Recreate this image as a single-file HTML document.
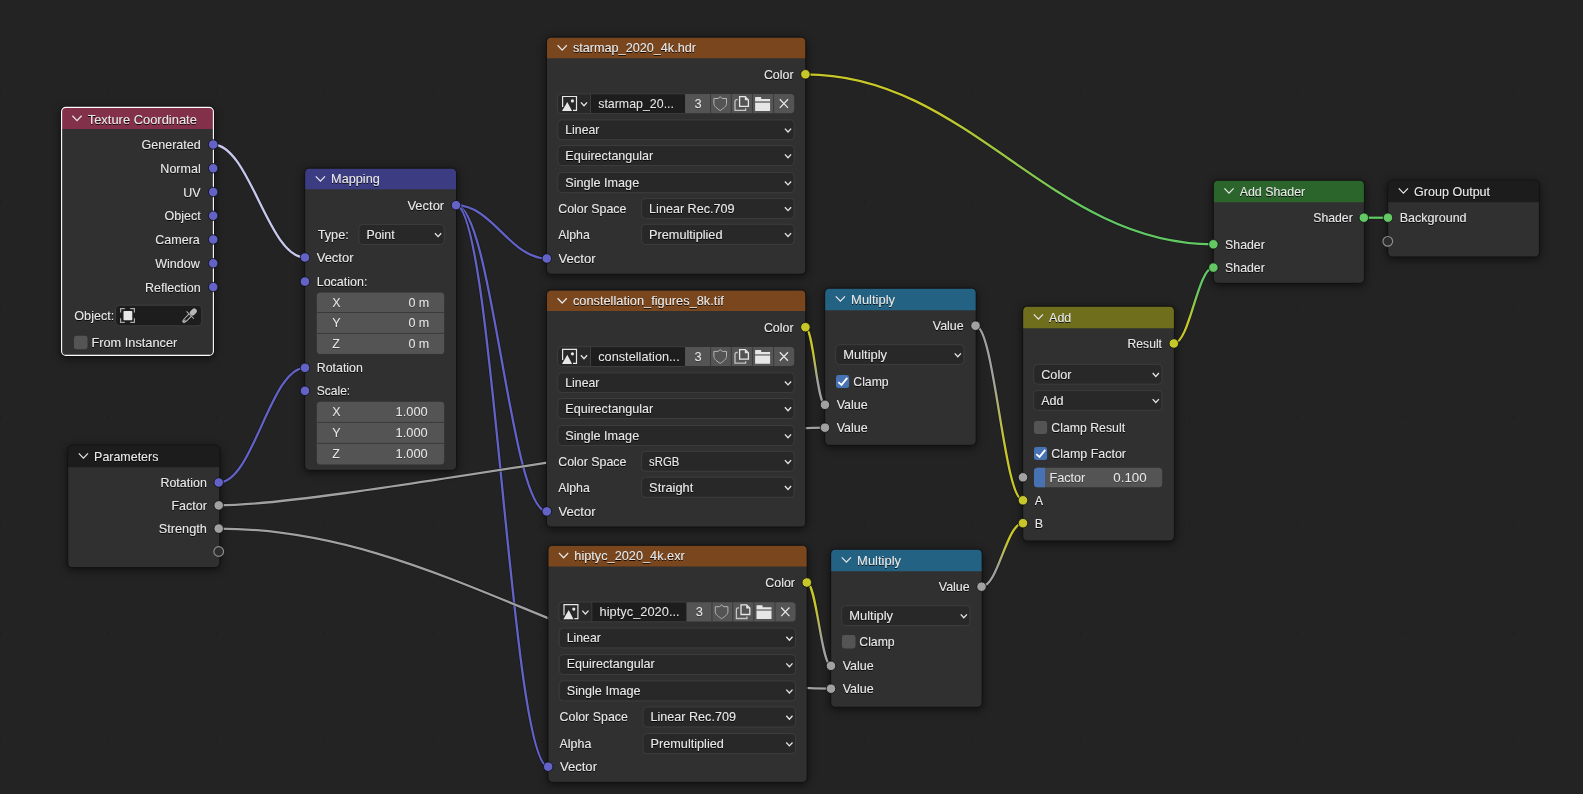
<!DOCTYPE html>
<html lang="en"><head><meta charset="utf-8"><title>Shader Nodes</title>
<style>
html,body{margin:0;padding:0;background:#232323;overflow:hidden}
body{width:1583px;height:794px}
svg{display:block}
.t text{font-family:"Liberation Sans",sans-serif;font-size:13.0px;fill:#e6e6e6}
.ck{fill:none;stroke:#e6e6e6;stroke-width:1.25}
.dk{fill:none;stroke:#e6e6e6;stroke-width:1.3}
</style></head><body>
<svg width="1583" height="794" viewBox="0 0 1583 794">
<defs>
<filter id="sh" filterUnits="userSpaceOnUse" x="0" y="0" width="1583" height="794"><feGaussianBlur stdDeviation="4.5"/></filter>
<filter id="ts" filterUnits="userSpaceOnUse" x="0" y="0" width="1583" height="794"><feDropShadow dx="0" dy="1" stdDeviation="0.55" flood-color="#000" flood-opacity="0.85"/></filter>
<filter id="ts2" filterUnits="userSpaceOnUse" x="0" y="0" width="1583" height="794"><feDropShadow dx="0" dy="1" stdDeviation="0.5" flood-color="#000" flood-opacity="0.3"/></filter>
</defs>
<rect width="1583" height="794" fill="#232323"/>
<g fill="#1e1e1e"><circle cx="0.5" cy="-14.4" r="0.9"/><circle cx="0.5" cy="93.6" r="0.9"/><circle cx="0.5" cy="201.6" r="0.9"/><circle cx="0.5" cy="309.6" r="0.9"/><circle cx="0.5" cy="417.6" r="0.9"/><circle cx="0.5" cy="525.6" r="0.9"/><circle cx="0.5" cy="633.6" r="0.9"/><circle cx="0.5" cy="741.6" r="0.9"/><circle cx="0.5" cy="849.6" r="0.9"/><circle cx="108.55" cy="-14.4" r="0.9"/><circle cx="108.55" cy="93.6" r="0.9"/><circle cx="108.55" cy="201.6" r="0.9"/><circle cx="108.55" cy="309.6" r="0.9"/><circle cx="108.55" cy="417.6" r="0.9"/><circle cx="108.55" cy="525.6" r="0.9"/><circle cx="108.55" cy="633.6" r="0.9"/><circle cx="108.55" cy="741.6" r="0.9"/><circle cx="108.55" cy="849.6" r="0.9"/><circle cx="216.6" cy="-14.4" r="0.9"/><circle cx="216.6" cy="93.6" r="0.9"/><circle cx="216.6" cy="201.6" r="0.9"/><circle cx="216.6" cy="309.6" r="0.9"/><circle cx="216.6" cy="417.6" r="0.9"/><circle cx="216.6" cy="525.6" r="0.9"/><circle cx="216.6" cy="633.6" r="0.9"/><circle cx="216.6" cy="741.6" r="0.9"/><circle cx="216.6" cy="849.6" r="0.9"/><circle cx="324.65" cy="-14.4" r="0.9"/><circle cx="324.65" cy="93.6" r="0.9"/><circle cx="324.65" cy="201.6" r="0.9"/><circle cx="324.65" cy="309.6" r="0.9"/><circle cx="324.65" cy="417.6" r="0.9"/><circle cx="324.65" cy="525.6" r="0.9"/><circle cx="324.65" cy="633.6" r="0.9"/><circle cx="324.65" cy="741.6" r="0.9"/><circle cx="324.65" cy="849.6" r="0.9"/><circle cx="432.7" cy="-14.4" r="0.9"/><circle cx="432.7" cy="93.6" r="0.9"/><circle cx="432.7" cy="201.6" r="0.9"/><circle cx="432.7" cy="309.6" r="0.9"/><circle cx="432.7" cy="417.6" r="0.9"/><circle cx="432.7" cy="525.6" r="0.9"/><circle cx="432.7" cy="633.6" r="0.9"/><circle cx="432.7" cy="741.6" r="0.9"/><circle cx="432.7" cy="849.6" r="0.9"/><circle cx="540.75" cy="-14.4" r="0.9"/><circle cx="540.75" cy="93.6" r="0.9"/><circle cx="540.75" cy="201.6" r="0.9"/><circle cx="540.75" cy="309.6" r="0.9"/><circle cx="540.75" cy="417.6" r="0.9"/><circle cx="540.75" cy="525.6" r="0.9"/><circle cx="540.75" cy="633.6" r="0.9"/><circle cx="540.75" cy="741.6" r="0.9"/><circle cx="540.75" cy="849.6" r="0.9"/><circle cx="648.8" cy="-14.4" r="0.9"/><circle cx="648.8" cy="93.6" r="0.9"/><circle cx="648.8" cy="201.6" r="0.9"/><circle cx="648.8" cy="309.6" r="0.9"/><circle cx="648.8" cy="417.6" r="0.9"/><circle cx="648.8" cy="525.6" r="0.9"/><circle cx="648.8" cy="633.6" r="0.9"/><circle cx="648.8" cy="741.6" r="0.9"/><circle cx="648.8" cy="849.6" r="0.9"/><circle cx="756.85" cy="-14.4" r="0.9"/><circle cx="756.85" cy="93.6" r="0.9"/><circle cx="756.85" cy="201.6" r="0.9"/><circle cx="756.85" cy="309.6" r="0.9"/><circle cx="756.85" cy="417.6" r="0.9"/><circle cx="756.85" cy="525.6" r="0.9"/><circle cx="756.85" cy="633.6" r="0.9"/><circle cx="756.85" cy="741.6" r="0.9"/><circle cx="756.85" cy="849.6" r="0.9"/><circle cx="864.9" cy="-14.4" r="0.9"/><circle cx="864.9" cy="93.6" r="0.9"/><circle cx="864.9" cy="201.6" r="0.9"/><circle cx="864.9" cy="309.6" r="0.9"/><circle cx="864.9" cy="417.6" r="0.9"/><circle cx="864.9" cy="525.6" r="0.9"/><circle cx="864.9" cy="633.6" r="0.9"/><circle cx="864.9" cy="741.6" r="0.9"/><circle cx="864.9" cy="849.6" r="0.9"/><circle cx="972.95" cy="-14.4" r="0.9"/><circle cx="972.95" cy="93.6" r="0.9"/><circle cx="972.95" cy="201.6" r="0.9"/><circle cx="972.95" cy="309.6" r="0.9"/><circle cx="972.95" cy="417.6" r="0.9"/><circle cx="972.95" cy="525.6" r="0.9"/><circle cx="972.95" cy="633.6" r="0.9"/><circle cx="972.95" cy="741.6" r="0.9"/><circle cx="972.95" cy="849.6" r="0.9"/><circle cx="1081" cy="-14.4" r="0.9"/><circle cx="1081" cy="93.6" r="0.9"/><circle cx="1081" cy="201.6" r="0.9"/><circle cx="1081" cy="309.6" r="0.9"/><circle cx="1081" cy="417.6" r="0.9"/><circle cx="1081" cy="525.6" r="0.9"/><circle cx="1081" cy="633.6" r="0.9"/><circle cx="1081" cy="741.6" r="0.9"/><circle cx="1081" cy="849.6" r="0.9"/><circle cx="1189.05" cy="-14.4" r="0.9"/><circle cx="1189.05" cy="93.6" r="0.9"/><circle cx="1189.05" cy="201.6" r="0.9"/><circle cx="1189.05" cy="309.6" r="0.9"/><circle cx="1189.05" cy="417.6" r="0.9"/><circle cx="1189.05" cy="525.6" r="0.9"/><circle cx="1189.05" cy="633.6" r="0.9"/><circle cx="1189.05" cy="741.6" r="0.9"/><circle cx="1189.05" cy="849.6" r="0.9"/><circle cx="1297.1" cy="-14.4" r="0.9"/><circle cx="1297.1" cy="93.6" r="0.9"/><circle cx="1297.1" cy="201.6" r="0.9"/><circle cx="1297.1" cy="309.6" r="0.9"/><circle cx="1297.1" cy="417.6" r="0.9"/><circle cx="1297.1" cy="525.6" r="0.9"/><circle cx="1297.1" cy="633.6" r="0.9"/><circle cx="1297.1" cy="741.6" r="0.9"/><circle cx="1297.1" cy="849.6" r="0.9"/><circle cx="1405.15" cy="-14.4" r="0.9"/><circle cx="1405.15" cy="93.6" r="0.9"/><circle cx="1405.15" cy="201.6" r="0.9"/><circle cx="1405.15" cy="309.6" r="0.9"/><circle cx="1405.15" cy="417.6" r="0.9"/><circle cx="1405.15" cy="525.6" r="0.9"/><circle cx="1405.15" cy="633.6" r="0.9"/><circle cx="1405.15" cy="741.6" r="0.9"/><circle cx="1405.15" cy="849.6" r="0.9"/><circle cx="1513.2" cy="-14.4" r="0.9"/><circle cx="1513.2" cy="93.6" r="0.9"/><circle cx="1513.2" cy="201.6" r="0.9"/><circle cx="1513.2" cy="309.6" r="0.9"/><circle cx="1513.2" cy="417.6" r="0.9"/><circle cx="1513.2" cy="525.6" r="0.9"/><circle cx="1513.2" cy="633.6" r="0.9"/><circle cx="1513.2" cy="741.6" r="0.9"/><circle cx="1513.2" cy="849.6" r="0.9"/></g>
<g filter="url(#sh)" fill="#000" opacity="0.55">
<rect x="60.6" y="108.4" width="153.8" height="250" rx="6"/>
<rect x="304" y="169.5" width="153.2" height="303.5" rx="6"/>
<rect x="67" y="446.5" width="153.5" height="123.8" rx="6"/>
<rect x="545.8" y="38.4" width="260.7" height="238.5" rx="6"/>
<rect x="545.8" y="291.3" width="260.7" height="238.5" rx="6"/>
<rect x="547.2" y="546.6" width="260.7" height="238.5" rx="6"/>
<rect x="824" y="289.5" width="152.9" height="158.5" rx="6"/>
<rect x="830" y="550.5" width="152.9" height="159.4" rx="6"/>
<rect x="1022" y="307.5" width="153.1" height="236.2" rx="6"/>
<rect x="1212.6" y="181.5" width="152.5" height="104.5" rx="6"/>
<rect x="1387" y="181.5" width="153.1" height="78.2" rx="6"/>
</g>
<g stroke-linecap="butt">
<path d="M212.8 144.5C249.68 144.5 268.12 257.5 305 257.5" stroke="#0e0e10" stroke-width="3.5" fill="none" opacity="0.6"/>
<path d="M212.8 144.5C249.68 144.5 268.12 257.5 305 257.5" stroke="#c8c8ee" stroke-width="2.3" fill="none"/>
<path d="M218.7 482.5C253.22 482.5 270.48 367.8 305 367.8" stroke="#0e0e10" stroke-width="3.5" fill="none" opacity="0.6"/>
<path d="M218.7 482.5C253.22 482.5 270.48 367.8 305 367.8" stroke="#6363c7" stroke-width="2.3" fill="none"/>
<path d="M455.9 205.2C492.26 205.2 510.44 258.5 546.8 258.5" stroke="#0e0e10" stroke-width="3.5" fill="none" opacity="0.6"/>
<path d="M455.9 205.2C492.26 205.2 510.44 258.5 546.8 258.5" stroke="#6363c7" stroke-width="2.3" fill="none"/>
<path d="M455.9 205.2C492.26 205.2 510.44 511.4 546.8 511.4" stroke="#0e0e10" stroke-width="3.5" fill="none" opacity="0.6"/>
<path d="M455.9 205.2C492.26 205.2 510.44 511.4 546.8 511.4" stroke="#6363c7" stroke-width="2.3" fill="none"/>
<path d="M455.9 205.2C492.82 205.2 511.28 766.7 548.2 766.7" stroke="#0e0e10" stroke-width="3.5" fill="none" opacity="0.6"/>
<path d="M455.9 205.2C492.82 205.2 511.28 766.7 548.2 766.7" stroke="#6363c7" stroke-width="2.3" fill="none"/>
<path d="M218.7 505.4C327.48 505.4 716.22 427.7 825 427.7" stroke="#0e0e10" stroke-width="3.5" fill="none" opacity="0.6"/>
<path d="M218.7 505.4C327.48 505.4 716.22 427.7 825 427.7" stroke="#a1a1a1" stroke-width="2.3" fill="none"/>
<path d="M218.7 528.6C442.84 528.6 606.86 688.7 831 688.7" stroke="#0e0e10" stroke-width="3.5" fill="none" opacity="0.6"/>
<path d="M218.7 528.6C442.84 528.6 606.86 688.7 831 688.7" stroke="#a1a1a1" stroke-width="2.3" fill="none"/>
<path d="M805.4 74.3C968.6 74.3 1050.2 244.3 1213.4 244.3" stroke="#0e0e10" stroke-width="3.5" fill="none" opacity="0.6"/>
<linearGradient id="g7" gradientUnits="userSpaceOnUse" x1="805.4" y1="74.3" x2="1213.4" y2="244.3"><stop offset="0.3" stop-color="#c7c729"/><stop offset="0.7" stop-color="#63c763"/></linearGradient>
<path d="M805.4 74.3C968.6 74.3 1050.2 244.3 1213.4 244.3" stroke="url(#g7)" stroke-width="2.3" fill="none"/>
<path d="M805.4 327.2C813.24 327.2 817.16 404.8 825 404.8" stroke="#0e0e10" stroke-width="3.5" fill="none" opacity="0.6"/>
<linearGradient id="g8" gradientUnits="userSpaceOnUse" x1="805.4" y1="327.2" x2="825" y2="404.8"><stop offset="0.3" stop-color="#c7c729"/><stop offset="0.7" stop-color="#a1a1a1"/></linearGradient>
<path d="M805.4 327.2C813.24 327.2 817.16 404.8 825 404.8" stroke="url(#g8)" stroke-width="2.3" fill="none"/>
<path d="M806.8 582.5C816.48 582.5 821.32 665.8 831 665.8" stroke="#0e0e10" stroke-width="3.5" fill="none" opacity="0.6"/>
<linearGradient id="g9" gradientUnits="userSpaceOnUse" x1="806.8" y1="582.5" x2="831" y2="665.8"><stop offset="0.3" stop-color="#c7c729"/><stop offset="0.7" stop-color="#a1a1a1"/></linearGradient>
<path d="M806.8 582.5C816.48 582.5 821.32 665.8 831 665.8" stroke="url(#g9)" stroke-width="2.3" fill="none"/>
<path d="M975.5 325.7C994.5 325.7 1004 500.3 1023 500.3" stroke="#0e0e10" stroke-width="3.5" fill="none" opacity="0.6"/>
<linearGradient id="g10" gradientUnits="userSpaceOnUse" x1="975.5" y1="325.7" x2="1023" y2="500.3"><stop offset="0.3" stop-color="#a1a1a1"/><stop offset="0.7" stop-color="#c7c729"/></linearGradient>
<path d="M975.5 325.7C994.5 325.7 1004 500.3 1023 500.3" stroke="url(#g10)" stroke-width="2.3" fill="none"/>
<path d="M981.5 586.7C998.1 586.7 1006.4 523.2 1023 523.2" stroke="#0e0e10" stroke-width="3.5" fill="none" opacity="0.6"/>
<linearGradient id="g11" gradientUnits="userSpaceOnUse" x1="981.5" y1="586.7" x2="1023" y2="523.2"><stop offset="0.3" stop-color="#a1a1a1"/><stop offset="0.7" stop-color="#c7c729"/></linearGradient>
<path d="M981.5 586.7C998.1 586.7 1006.4 523.2 1023 523.2" stroke="url(#g11)" stroke-width="2.3" fill="none"/>
<path d="M1173.8 343.5C1189.64 343.5 1197.56 267.6 1213.4 267.6" stroke="#0e0e10" stroke-width="3.5" fill="none" opacity="0.6"/>
<linearGradient id="g12" gradientUnits="userSpaceOnUse" x1="1173.8" y1="343.5" x2="1213.4" y2="267.6"><stop offset="0.3" stop-color="#c7c729"/><stop offset="0.7" stop-color="#63c763"/></linearGradient>
<path d="M1173.8 343.5C1189.64 343.5 1197.56 267.6 1213.4 267.6" stroke="url(#g12)" stroke-width="2.3" fill="none"/>
<path d="M1363.9 217.7C1363.9 217.7 1388 217.7 1388 217.7" stroke="#0e0e10" stroke-width="3.5" fill="none" opacity="0.6"/>
<path d="M1363.9 217.7C1363.9 217.7 1388 217.7 1388 217.7" stroke="#63c763" stroke-width="2.3" fill="none"/>
</g>
<g>
<rect x="61.6" y="107.4" width="151.8" height="248" rx="4.2" fill="#303030"/>
<path d="M61.6 129V111.6a4.2 4.2 0 0 1 4.2 -4.2H209.2a4.2 4.2 0 0 1 4.2 4.2V129Z" fill="#83314a"/>
<rect x="60.6" y="106.4" width="153.8" height="250" rx="5.2" fill="none" stroke="#141414" stroke-width="1"/>
<rect x="61.6" y="107.4" width="151.8" height="248" rx="4.2" fill="none" stroke="#ffffff" stroke-width="1.1"/>
<rect x="305" y="168.5" width="151.2" height="301.5" rx="4.2" fill="#303030"/>
<path d="M305 189.3V172.7a4.2 4.2 0 0 1 4.2 -4.2H452a4.2 4.2 0 0 1 4.2 4.2V189.3Z" fill="#3c3c83"/>
<rect x="304.7" y="168.2" width="151.8" height="302.1" rx="4.5" fill="none" stroke="#121212" stroke-width="0.9"/>
<rect x="68" y="445.5" width="151.5" height="121.8" rx="4.2" fill="#303030"/>
<path d="M68 467.2V449.7a4.2 4.2 0 0 1 4.2 -4.2H215.3a4.2 4.2 0 0 1 4.2 4.2V467.2Z" fill="#1c1c1c"/>
<rect x="67.7" y="445.2" width="152.1" height="122.4" rx="4.5" fill="none" stroke="#121212" stroke-width="0.9"/>
<rect x="546.8" y="37.4" width="258.7" height="236.5" rx="4.2" fill="#303030"/>
<path d="M546.8 58.2V41.6a4.2 4.2 0 0 1 4.2 -4.2H801.3a4.2 4.2 0 0 1 4.2 4.2V58.2Z" fill="#79461d"/>
<rect x="546.5" y="37.1" width="259.3" height="237.1" rx="4.5" fill="none" stroke="#121212" stroke-width="0.9"/>
<rect x="546.8" y="290.3" width="258.7" height="236.5" rx="4.2" fill="#303030"/>
<path d="M546.8 311.1V294.5a4.2 4.2 0 0 1 4.2 -4.2H801.3a4.2 4.2 0 0 1 4.2 4.2V311.1Z" fill="#79461d"/>
<rect x="546.5" y="290" width="259.3" height="237.1" rx="4.5" fill="none" stroke="#121212" stroke-width="0.9"/>
<rect x="548.2" y="545.6" width="258.7" height="236.5" rx="4.2" fill="#303030"/>
<path d="M548.2 566.4V549.8a4.2 4.2 0 0 1 4.2 -4.2H802.7a4.2 4.2 0 0 1 4.2 4.2V566.4Z" fill="#79461d"/>
<rect x="547.9" y="545.3" width="259.3" height="237.1" rx="4.5" fill="none" stroke="#121212" stroke-width="0.9"/>
<rect x="825" y="288.5" width="150.9" height="156.5" rx="4.2" fill="#303030"/>
<path d="M825 310.2V292.7a4.2 4.2 0 0 1 4.2 -4.2H971.7a4.2 4.2 0 0 1 4.2 4.2V310.2Z" fill="#246283"/>
<rect x="824.7" y="288.2" width="151.5" height="157.1" rx="4.5" fill="none" stroke="#121212" stroke-width="0.9"/>
<rect x="831" y="549.5" width="150.9" height="157.4" rx="4.2" fill="#303030"/>
<path d="M831 571.2V553.7a4.2 4.2 0 0 1 4.2 -4.2H977.7a4.2 4.2 0 0 1 4.2 4.2V571.2Z" fill="#246283"/>
<rect x="830.7" y="549.2" width="151.5" height="158" rx="4.5" fill="none" stroke="#121212" stroke-width="0.9"/>
<rect x="1023" y="306.5" width="151.1" height="234.2" rx="4.2" fill="#303030"/>
<path d="M1023 328.2V310.7a4.2 4.2 0 0 1 4.2 -4.2H1169.9a4.2 4.2 0 0 1 4.2 4.2V328.2Z" fill="#6e6e1d"/>
<rect x="1022.7" y="306.2" width="151.7" height="234.8" rx="4.5" fill="none" stroke="#121212" stroke-width="0.9"/>
<rect x="1213.6" y="180.5" width="150.5" height="102.5" rx="4.2" fill="#303030"/>
<path d="M1213.6 202.2V184.7a4.2 4.2 0 0 1 4.2 -4.2H1359.9a4.2 4.2 0 0 1 4.2 4.2V202.2Z" fill="#2b652b"/>
<rect x="1213.3" y="180.2" width="151.1" height="103.1" rx="4.5" fill="none" stroke="#121212" stroke-width="0.9"/>
<rect x="1388" y="180.5" width="151.1" height="76.2" rx="4.2" fill="#303030"/>
<path d="M1388 202.3V184.7a4.2 4.2 0 0 1 4.2 -4.2H1534.9a4.2 4.2 0 0 1 4.2 4.2V202.3Z" fill="#1c1c1c"/>
<rect x="1387.7" y="180.2" width="151.7" height="76.8" rx="4.5" fill="none" stroke="#121212" stroke-width="0.9"/>
</g>
<g>
<rect x="115.6" y="305.2" width="86.2" height="20.6" rx="3.8" fill="#1d1d1d" stroke="#3d3d3d" stroke-width="1"/>
<rect x="74" y="335.8" width="13.5" height="13.5" rx="2.4" fill="#545454"/>
<rect x="358.9" y="224.4" width="85.4" height="20.1" rx="3.8" fill="#282828" stroke="#3d3d3d" stroke-width="1"/>
<rect x="316.8" y="292.6" width="127.4" height="61.4" rx="3.6" fill="#545454"/>
<rect x="316.8" y="312" width="127.4" height="1" fill="#3a3a3a"/>
<rect x="316.8" y="332.9" width="127.4" height="1" fill="#3a3a3a"/>
<rect x="316.8" y="401.7" width="127.4" height="62.7" rx="3.6" fill="#545454"/>
<rect x="316.8" y="421.9" width="127.4" height="1" fill="#3a3a3a"/>
<rect x="316.8" y="442.9" width="127.4" height="1" fill="#3a3a3a"/>
<path d="M590.5 93.8H561.3a3.8 3.8 0 0 0 -3.8 3.8V109.8a3.8 3.8 0 0 0 3.8 3.8H590.5Z" fill="#282828" stroke="#3d3d3d"/>
<rect x="591" y="93.9" width="94.1" height="19.6" fill="#1d1d1d"/>
<path d="M590.5 93.8H685M590.5 113.6H685" stroke="#3d3d3d" fill="none"/>
<path d="M685.1 94H790.6a3.6 3.6 0 0 1 3.6 3.6V109.6a3.6 3.6 0 0 1 -3.6 3.6H685.1Z" fill="#545454"/>
<rect x="710.05" y="93.9" width="1" height="19.6" fill="#3a3a3a"/>
<rect x="730.85" y="93.9" width="1" height="19.6" fill="#3a3a3a"/>
<rect x="751.9" y="93.9" width="1" height="19.6" fill="#3a3a3a"/>
<rect x="773.1" y="93.9" width="1" height="19.6" fill="#3a3a3a"/>
<rect x="557.8" y="119.9" width="236.4" height="19.8" rx="3.8" fill="#282828" stroke="#3d3d3d" stroke-width="1"/>
<rect x="557.8" y="145.6" width="236.4" height="20" rx="3.8" fill="#282828" stroke="#3d3d3d" stroke-width="1"/>
<rect x="557.8" y="172.6" width="236.4" height="20.1" rx="3.8" fill="#282828" stroke="#3d3d3d" stroke-width="1"/>
<rect x="641.6" y="198.4" width="152.6" height="20" rx="3.8" fill="#282828" stroke="#3d3d3d" stroke-width="1"/>
<rect x="641.6" y="224.3" width="152.6" height="20.1" rx="3.8" fill="#282828" stroke="#3d3d3d" stroke-width="1"/>
<path d="M590.5 346.7H561.3a3.8 3.8 0 0 0 -3.8 3.8V362.7a3.8 3.8 0 0 0 3.8 3.8H590.5Z" fill="#282828" stroke="#3d3d3d"/>
<rect x="591" y="346.8" width="94.1" height="19.6" fill="#1d1d1d"/>
<path d="M590.5 346.7H685M590.5 366.5H685" stroke="#3d3d3d" fill="none"/>
<path d="M685.1 346.9H790.6a3.6 3.6 0 0 1 3.6 3.6V362.5a3.6 3.6 0 0 1 -3.6 3.6H685.1Z" fill="#545454"/>
<rect x="710.05" y="346.8" width="1" height="19.6" fill="#3a3a3a"/>
<rect x="730.85" y="346.8" width="1" height="19.6" fill="#3a3a3a"/>
<rect x="751.9" y="346.8" width="1" height="19.6" fill="#3a3a3a"/>
<rect x="773.1" y="346.8" width="1" height="19.6" fill="#3a3a3a"/>
<rect x="557.8" y="372.8" width="236.4" height="19.8" rx="3.8" fill="#282828" stroke="#3d3d3d" stroke-width="1"/>
<rect x="557.8" y="398.5" width="236.4" height="20" rx="3.8" fill="#282828" stroke="#3d3d3d" stroke-width="1"/>
<rect x="557.8" y="425.5" width="236.4" height="20.1" rx="3.8" fill="#282828" stroke="#3d3d3d" stroke-width="1"/>
<rect x="641.6" y="451.3" width="152.6" height="20" rx="3.8" fill="#282828" stroke="#3d3d3d" stroke-width="1"/>
<rect x="641.6" y="477.2" width="152.6" height="20.1" rx="3.8" fill="#282828" stroke="#3d3d3d" stroke-width="1"/>
<path d="M591.9 602H562.7a3.8 3.8 0 0 0 -3.8 3.8V618a3.8 3.8 0 0 0 3.8 3.8H591.9Z" fill="#282828" stroke="#3d3d3d"/>
<rect x="592.4" y="602.1" width="94.1" height="19.6" fill="#1d1d1d"/>
<path d="M591.9 602H686.4M591.9 621.8H686.4" stroke="#3d3d3d" fill="none"/>
<path d="M686.5 602.2H792a3.6 3.6 0 0 1 3.6 3.6V617.8a3.6 3.6 0 0 1 -3.6 3.6H686.5Z" fill="#545454"/>
<rect x="711.45" y="602.1" width="1" height="19.6" fill="#3a3a3a"/>
<rect x="732.25" y="602.1" width="1" height="19.6" fill="#3a3a3a"/>
<rect x="753.3" y="602.1" width="1" height="19.6" fill="#3a3a3a"/>
<rect x="774.5" y="602.1" width="1" height="19.6" fill="#3a3a3a"/>
<rect x="559.2" y="628.1" width="236.4" height="19.8" rx="3.8" fill="#282828" stroke="#3d3d3d" stroke-width="1"/>
<rect x="559.2" y="654.6" width="236.4" height="20" rx="3.8" fill="#282828" stroke="#3d3d3d" stroke-width="1"/>
<rect x="559.2" y="680.8" width="236.4" height="20.1" rx="3.8" fill="#282828" stroke="#3d3d3d" stroke-width="1"/>
<rect x="643" y="707" width="152.6" height="20" rx="3.8" fill="#282828" stroke="#3d3d3d" stroke-width="1"/>
<rect x="643" y="733.6" width="152.6" height="20.1" rx="3.8" fill="#282828" stroke="#3d3d3d" stroke-width="1"/>
<rect x="835.7" y="344.7" width="128.3" height="19.8" rx="3.8" fill="#282828" stroke="#3d3d3d" stroke-width="1"/>
<rect x="836" y="375" width="13.1" height="13.1" rx="2.4" fill="#4772b3"/>
<rect x="841.7" y="605.7" width="128.3" height="19.8" rx="3.8" fill="#282828" stroke="#3d3d3d" stroke-width="1"/>
<rect x="842" y="634.9" width="13.5" height="13.5" rx="2.4" fill="#545454"/>
<rect x="1033.7" y="364.3" width="128.3" height="19.9" rx="3.8" fill="#282828" stroke="#3d3d3d" stroke-width="1"/>
<rect x="1033.7" y="390.4" width="128.3" height="19.9" rx="3.8" fill="#282828" stroke="#3d3d3d" stroke-width="1"/>
<rect x="1034" y="421" width="13.1" height="13.1" rx="2.4" fill="#545454"/>
<rect x="1034" y="447" width="13.1" height="13.1" rx="2.4" fill="#4772b3"/>
<rect x="1034" y="467.7" width="128.2" height="19.6" rx="3.6" fill="#545454"/>
<path d="M1045 467.7H1037.6a3.6 3.6 0 0 0 -3.6 3.6V483.7a3.6 3.6 0 0 0 3.6 3.6H1045Z" fill="#4772b3"/>
</g>
<g>
<path d="M72.4 115.8L77 120.6L81.6 115.8" class="ck"/>
<path d="M120.6 312.6V308.6H124.8M130.2 308.6H134.4V312.6M134.4 318.2V322.3H130.2M124.8 322.3H120.6V318.2" fill="none" stroke="#a8a8a8" stroke-width="1.2"/>
<rect x="123.5" y="311" width="8.8" height="9.2" rx="0.8" fill="#e8e8e8"/>
<g transform="translate(189.8,315.5) rotate(-45)" fill="none" stroke="#b8b8b8" stroke-width="1"><rect x="1.2" y="-2.6" width="7.6" height="5.2" rx="2.2" fill="#b8b8b8" stroke="none"/><path d="M0.6 -5.2V5.2"/><path d="M0.6 -1.6H-6.2L-9.6 -0.9M0.6 1.6H-6.2L-9.6 0.9M-9.8 0H-6"/></g>
<path d="M315.8 176.4L320.4 181.2L325 176.4" class="ck"/>
<path d="M435 233.25L438.1 236.65L441.2 233.25" class="dk"/>
<path d="M78.8 453.4L83.4 458.2L88 453.4" class="ck"/>
<path d="M557.6 45.3L562.2 50.1L566.8 45.3" class="ck"/>
<path d="M562.6 107.1V96.5H576.5V110.4H573" fill="none" stroke="#e6e6e6" stroke-width="1.2"/>
<path d="M562 111L567.3 101.9L572.1 111Z" fill="#e6e6e6"/>
<circle cx="572.4" cy="100.9" r="1.6" fill="#e6e6e6"/>
<path d="M580.9 102.4L584 105.8L587.1 102.4" class="dk"/>
<path d="M720.2 96.8L718 98.5H713.9V103.5C713.9 106.5 717.6 108.7 720.2 110.5C722.8 108.7 726.5 106.5 726.5 103.5V98.5H722.4Z" fill="none" stroke="#b4b4b4" stroke-width="1"/>
<path d="M739.6 96.7H745.2L748.4 99.9V106.3H739.6Z" fill="none" stroke="#e6e6e6" stroke-width="1.3"/>
<path d="M744.8 96.7V100.3H748.4Z" fill="#e6e6e6"/>
<path d="M737.7 99.6H736.7a1.7 1.7 0 0 0 -1.7 1.7V110.3H745.6V108.3" fill="none" stroke="#c4c4c4" stroke-width="1.3"/>
<path d="M755.1 97.6a0.6 0.6 0 0 1 0.6 -0.6H760.7a0.5 0.5 0 0 1 0.5 0.5V99H770.1V101.2H755.1Z" fill="#e6e6e6"/>
<rect x="755.1" y="101.2" width="15" height="1.7" fill="#909090"/>
<path d="M755.1 102.9H770.1V110.4a0.5 0.5 0 0 1 -0.5 0.5H755.6a0.5 0.5 0 0 1 -0.5 -0.5Z" fill="#e6e6e6"/>
<path d="M779.8 99.3L788 107.9M788 99.3L779.8 107.9" fill="none" stroke="#e6e6e6" stroke-width="1.3"/>
<path d="M784.9 128.6L788 132L791.1 128.6" class="dk"/>
<path d="M784.9 154.4L788 157.8L791.1 154.4" class="dk"/>
<path d="M784.9 181.45L788 184.85L791.1 181.45" class="dk"/>
<path d="M784.9 207.2L788 210.6L791.1 207.2" class="dk"/>
<path d="M784.9 233.15L788 236.55L791.1 233.15" class="dk"/>
<path d="M557.6 298.2L562.2 303L566.8 298.2" class="ck"/>
<path d="M562.6 360V349.4H576.5V363.3H573" fill="none" stroke="#e6e6e6" stroke-width="1.2"/>
<path d="M562 363.9L567.3 354.8L572.1 363.9Z" fill="#e6e6e6"/>
<circle cx="572.4" cy="353.8" r="1.6" fill="#e6e6e6"/>
<path d="M580.9 355.3L584 358.7L587.1 355.3" class="dk"/>
<path d="M720.2 349.7L718 351.4H713.9V356.4C713.9 359.4 717.6 361.6 720.2 363.4C722.8 361.6 726.5 359.4 726.5 356.4V351.4H722.4Z" fill="none" stroke="#b4b4b4" stroke-width="1"/>
<path d="M739.6 349.6H745.2L748.4 352.8V359.2H739.6Z" fill="none" stroke="#e6e6e6" stroke-width="1.3"/>
<path d="M744.8 349.6V353.2H748.4Z" fill="#e6e6e6"/>
<path d="M737.7 352.5H736.7a1.7 1.7 0 0 0 -1.7 1.7V363.2H745.6V361.2" fill="none" stroke="#c4c4c4" stroke-width="1.3"/>
<path d="M755.1 350.5a0.6 0.6 0 0 1 0.6 -0.6H760.7a0.5 0.5 0 0 1 0.5 0.5V351.9H770.1V354.1H755.1Z" fill="#e6e6e6"/>
<rect x="755.1" y="354.1" width="15" height="1.7" fill="#909090"/>
<path d="M755.1 355.8H770.1V363.3a0.5 0.5 0 0 1 -0.5 0.5H755.6a0.5 0.5 0 0 1 -0.5 -0.5Z" fill="#e6e6e6"/>
<path d="M779.8 352.2L788 360.8M788 352.2L779.8 360.8" fill="none" stroke="#e6e6e6" stroke-width="1.3"/>
<path d="M784.9 381.5L788 384.9L791.1 381.5" class="dk"/>
<path d="M784.9 407.3L788 410.7L791.1 407.3" class="dk"/>
<path d="M784.9 434.35L788 437.75L791.1 434.35" class="dk"/>
<path d="M784.9 460.1L788 463.5L791.1 460.1" class="dk"/>
<path d="M784.9 486.05L788 489.45L791.1 486.05" class="dk"/>
<path d="M559 553L563.6 557.8L568.2 553" class="ck"/>
<path d="M564 615.3V604.7H577.9V618.6H574.4" fill="none" stroke="#e6e6e6" stroke-width="1.2"/>
<path d="M563.4 619.2L568.7 610.1L573.5 619.2Z" fill="#e6e6e6"/>
<circle cx="573.8" cy="609.1" r="1.6" fill="#e6e6e6"/>
<path d="M582.3 610.6L585.4 614L588.5 610.6" class="dk"/>
<path d="M721.6 605L719.4 606.7H715.3V611.7C715.3 614.7 719 616.9 721.6 618.7C724.2 616.9 727.9 614.7 727.9 611.7V606.7H723.8Z" fill="none" stroke="#b4b4b4" stroke-width="1"/>
<path d="M741 604.9H746.6L749.8 608.1V614.5H741Z" fill="none" stroke="#e6e6e6" stroke-width="1.3"/>
<path d="M746.2 604.9V608.5H749.8Z" fill="#e6e6e6"/>
<path d="M739.1 607.8H738.1a1.7 1.7 0 0 0 -1.7 1.7V618.5H747V616.5" fill="none" stroke="#c4c4c4" stroke-width="1.3"/>
<path d="M756.5 605.8a0.6 0.6 0 0 1 0.6 -0.6H762.1a0.5 0.5 0 0 1 0.5 0.5V607.2H771.5V609.4H756.5Z" fill="#e6e6e6"/>
<rect x="756.5" y="609.4" width="15" height="1.7" fill="#909090"/>
<path d="M756.5 611.1H771.5V618.6a0.5 0.5 0 0 1 -0.5 0.5H757a0.5 0.5 0 0 1 -0.5 -0.5Z" fill="#e6e6e6"/>
<path d="M781.2 607.5L789.4 616.1M789.4 607.5L781.2 616.1" fill="none" stroke="#e6e6e6" stroke-width="1.3"/>
<path d="M786.3 636.8L789.4 640.2L792.5 636.8" class="dk"/>
<path d="M786.3 663.4L789.4 666.8L792.5 663.4" class="dk"/>
<path d="M786.3 689.65L789.4 693.05L792.5 689.65" class="dk"/>
<path d="M786.3 715.8L789.4 719.2L792.5 715.8" class="dk"/>
<path d="M786.3 742.45L789.4 745.85L792.5 742.45" class="dk"/>
<path d="M835.8 296.4L840.4 301.2L845 296.4" class="ck"/>
<path d="M954.7 353.4L957.8 356.8L960.9 353.4" class="dk"/>
<path d="M838.3 382.1L841.5 384.9L847.3 377.9" fill="none" stroke="#fff" stroke-width="1.8"/>
<path d="M841.8 557.4L846.4 562.2L851 557.4" class="ck"/>
<path d="M960.7 614.4L963.8 617.8L966.9 614.4" class="dk"/>
<path d="M1033.8 314.4L1038.4 319.2L1043 314.4" class="ck"/>
<path d="M1152.7 373.05L1155.8 376.45L1158.9 373.05" class="dk"/>
<path d="M1152.7 399.15L1155.8 402.55L1158.9 399.15" class="dk"/>
<path d="M1036.3 454.1L1039.5 456.9L1045.3 449.9" fill="none" stroke="#fff" stroke-width="1.8"/>
<path d="M1224.4 188.4L1229 193.2L1233.6 188.4" class="ck"/>
<path d="M1398.8 188.4L1403.4 193.2L1408 188.4" class="ck"/>
</g>
<g>
<circle cx="213.2" cy="144.5" r="4.75" fill="#6363c7" stroke="#0c0c12" stroke-width="0.8"/>
<circle cx="213.2" cy="168.25" r="4.75" fill="#6363c7" stroke="#0c0c12" stroke-width="0.8"/>
<circle cx="213.2" cy="192" r="4.75" fill="#6363c7" stroke="#0c0c12" stroke-width="0.8"/>
<circle cx="213.2" cy="215.75" r="4.75" fill="#6363c7" stroke="#0c0c12" stroke-width="0.8"/>
<circle cx="213.2" cy="239.5" r="4.75" fill="#6363c7" stroke="#0c0c12" stroke-width="0.8"/>
<circle cx="213.2" cy="263.25" r="4.75" fill="#6363c7" stroke="#0c0c12" stroke-width="0.8"/>
<circle cx="213.2" cy="287" r="4.75" fill="#6363c7" stroke="#0c0c12" stroke-width="0.8"/>
<circle cx="456" cy="205.2" r="4.75" fill="#6363c7" stroke="#0c0c12" stroke-width="0.8"/>
<circle cx="305" cy="257.5" r="4.75" fill="#6363c7" stroke="#0c0c12" stroke-width="0.8"/>
<circle cx="305" cy="281.6" r="4.75" fill="#6363c7" stroke="#0c0c12" stroke-width="0.8"/>
<circle cx="305" cy="367.8" r="4.75" fill="#6363c7" stroke="#0c0c12" stroke-width="0.8"/>
<circle cx="305" cy="390.8" r="4.75" fill="#6363c7" stroke="#0c0c12" stroke-width="0.8"/>
<circle cx="218.7" cy="482.5" r="4.75" fill="#6363c7" stroke="#0c0c12" stroke-width="0.8"/>
<circle cx="218.7" cy="505.4" r="4.75" fill="#a1a1a1" stroke="#0c0c12" stroke-width="0.8"/>
<circle cx="218.7" cy="528.6" r="4.75" fill="#a1a1a1" stroke="#0c0c12" stroke-width="0.8"/>
<circle cx="218.7" cy="551.5" r="4.85" fill="#2d2d2d" stroke="#8e8e8e" stroke-width="1.15"/>
<circle cx="805.4" cy="74.3" r="4.75" fill="#c7c729" stroke="#0c0c12" stroke-width="0.8"/>
<circle cx="546.8" cy="258.5" r="4.75" fill="#6363c7" stroke="#0c0c12" stroke-width="0.8"/>
<circle cx="805.4" cy="327.2" r="4.75" fill="#c7c729" stroke="#0c0c12" stroke-width="0.8"/>
<circle cx="546.8" cy="511.4" r="4.75" fill="#6363c7" stroke="#0c0c12" stroke-width="0.8"/>
<circle cx="806.8" cy="582.5" r="4.75" fill="#c7c729" stroke="#0c0c12" stroke-width="0.8"/>
<circle cx="548.2" cy="766.7" r="4.75" fill="#6363c7" stroke="#0c0c12" stroke-width="0.8"/>
<circle cx="975.5" cy="325.7" r="4.75" fill="#a1a1a1" stroke="#0c0c12" stroke-width="0.8"/>
<circle cx="825" cy="404.8" r="4.75" fill="#a1a1a1" stroke="#0c0c12" stroke-width="0.8"/>
<circle cx="825" cy="427.7" r="4.75" fill="#a1a1a1" stroke="#0c0c12" stroke-width="0.8"/>
<circle cx="981.5" cy="586.7" r="4.75" fill="#a1a1a1" stroke="#0c0c12" stroke-width="0.8"/>
<circle cx="831" cy="665.8" r="4.75" fill="#a1a1a1" stroke="#0c0c12" stroke-width="0.8"/>
<circle cx="831" cy="688.7" r="4.75" fill="#a1a1a1" stroke="#0c0c12" stroke-width="0.8"/>
<circle cx="1173.8" cy="343.5" r="4.75" fill="#c7c729" stroke="#0c0c12" stroke-width="0.8"/>
<circle cx="1023" cy="477.3" r="4.75" fill="#a1a1a1" stroke="#0c0c12" stroke-width="0.8"/>
<circle cx="1023" cy="500.3" r="4.75" fill="#c7c729" stroke="#0c0c12" stroke-width="0.8"/>
<circle cx="1023" cy="523.2" r="4.75" fill="#c7c729" stroke="#0c0c12" stroke-width="0.8"/>
<circle cx="1363.8" cy="217.7" r="4.75" fill="#63c763" stroke="#0c0c12" stroke-width="0.8"/>
<circle cx="1213.4" cy="244.3" r="4.75" fill="#63c763" stroke="#0c0c12" stroke-width="0.8"/>
<circle cx="1213.4" cy="267.6" r="4.75" fill="#63c763" stroke="#0c0c12" stroke-width="0.8"/>
<circle cx="1388" cy="217.7" r="4.75" fill="#63c763" stroke="#0c0c12" stroke-width="0.8"/>
<circle cx="1387.8" cy="241.3" r="4.85" fill="#2d2d2d" stroke="#8e8e8e" stroke-width="1.15"/>
</g>
<g class="t" filter="url(#ts)">
<text x="87.7" y="123.5" textLength="109.2" lengthAdjust="spacingAndGlyphs">Texture Coordinate</text>
<text x="141.54" y="149.1" textLength="59.16" lengthAdjust="spacingAndGlyphs">Generated</text>
<text x="160.36" y="172.85" textLength="40.34" lengthAdjust="spacingAndGlyphs">Normal</text>
<text x="183.31" y="196.6" textLength="17.39" lengthAdjust="spacingAndGlyphs">UV</text>
<text x="164.52" y="220.35" textLength="36.18" lengthAdjust="spacingAndGlyphs">Object</text>
<text x="155.27" y="244.1" textLength="44.53" lengthAdjust="spacingAndGlyphs">Camera</text>
<text x="155.28" y="267.85" textLength="44.52" lengthAdjust="spacingAndGlyphs">Window</text>
<text x="145.03" y="291.6" textLength="55.67" lengthAdjust="spacingAndGlyphs">Reflection</text>
<text x="74.3" y="320.2" textLength="40" lengthAdjust="spacingAndGlyphs">Object:</text>
<text x="91.4" y="347.3" textLength="85.9" lengthAdjust="spacingAndGlyphs">From Instancer</text>
<text x="331.1" y="182.7" textLength="48.7" lengthAdjust="spacingAndGlyphs">Mapping</text>
<text x="407.4" y="209.55" textLength="36.8" lengthAdjust="spacingAndGlyphs">Vector</text>
<text x="317.7" y="238.75" textLength="31.1" lengthAdjust="spacingAndGlyphs">Type:</text>
<text x="366.4" y="239.05" textLength="28.2" lengthAdjust="spacingAndGlyphs">Point</text>
<text x="316.7" y="261.85" textLength="36.8" lengthAdjust="spacingAndGlyphs">Vector</text>
<text x="316.7" y="285.95" textLength="50.8" lengthAdjust="spacingAndGlyphs">Location:</text>
<text x="316.7" y="372.15" textLength="46.2" lengthAdjust="spacingAndGlyphs">Rotation</text>
<text x="316.7" y="395.15" textLength="33.5" lengthAdjust="spacingAndGlyphs">Scale:</text>
<text x="94.1" y="460.5" textLength="64.3" lengthAdjust="spacingAndGlyphs">Parameters</text>
<text x="160.4" y="486.85" textLength="46.5" lengthAdjust="spacingAndGlyphs">Rotation</text>
<text x="171.4" y="509.75" textLength="35.5" lengthAdjust="spacingAndGlyphs">Factor</text>
<text x="158.7" y="532.95" textLength="48.2" lengthAdjust="spacingAndGlyphs">Strength</text>
<text x="572.9" y="51.8" textLength="123.1" lengthAdjust="spacingAndGlyphs">starmap_2020_4k.hdr</text>
<text x="763.9" y="78.65" textLength="29.7" lengthAdjust="spacingAndGlyphs">Color</text>
<text x="565.3" y="133.5" textLength="34.1" lengthAdjust="spacingAndGlyphs">Linear</text>
<text x="565.3" y="160" textLength="88" lengthAdjust="spacingAndGlyphs">Equirectangular</text>
<text x="565.3" y="186.9" textLength="73.9" lengthAdjust="spacingAndGlyphs">Single Image</text>
<text x="558.2" y="213.1" textLength="68.3" lengthAdjust="spacingAndGlyphs">Color Space</text>
<text x="649.1" y="213.1" textLength="85.4" lengthAdjust="spacingAndGlyphs">Linear Rec.709</text>
<text x="558.2" y="238.9" textLength="31.7" lengthAdjust="spacingAndGlyphs">Alpha</text>
<text x="649.1" y="238.9" textLength="73.4" lengthAdjust="spacingAndGlyphs">Premultiplied</text>
<text x="558.5" y="262.85" textLength="37.1" lengthAdjust="spacingAndGlyphs">Vector</text>
<text x="572.9" y="304.7" textLength="150.9" lengthAdjust="spacingAndGlyphs">constellation_figures_8k.tif</text>
<text x="763.9" y="331.55" textLength="29.7" lengthAdjust="spacingAndGlyphs">Color</text>
<text x="565.3" y="387.2" textLength="34.1" lengthAdjust="spacingAndGlyphs">Linear</text>
<text x="565.3" y="413.1" textLength="88" lengthAdjust="spacingAndGlyphs">Equirectangular</text>
<text x="565.3" y="439.8" textLength="73.9" lengthAdjust="spacingAndGlyphs">Single Image</text>
<text x="558.2" y="466" textLength="68.3" lengthAdjust="spacingAndGlyphs">Color Space</text>
<text x="649.1" y="466" textLength="30.2" lengthAdjust="spacingAndGlyphs">sRGB</text>
<text x="558.2" y="491.8" textLength="31.7" lengthAdjust="spacingAndGlyphs">Alpha</text>
<text x="649.1" y="491.8" textLength="44.2" lengthAdjust="spacingAndGlyphs">Straight</text>
<text x="558.5" y="515.75" textLength="37.1" lengthAdjust="spacingAndGlyphs">Vector</text>
<text x="574.3" y="560.4" textLength="110.5" lengthAdjust="spacingAndGlyphs">hiptyc_2020_4k.exr</text>
<text x="765.3" y="586.85" textLength="29.7" lengthAdjust="spacingAndGlyphs">Color</text>
<text x="566.7" y="641.7" textLength="34.1" lengthAdjust="spacingAndGlyphs">Linear</text>
<text x="566.7" y="668.4" textLength="88" lengthAdjust="spacingAndGlyphs">Equirectangular</text>
<text x="566.7" y="695.1" textLength="73.9" lengthAdjust="spacingAndGlyphs">Single Image</text>
<text x="559.6" y="721.3" textLength="68.3" lengthAdjust="spacingAndGlyphs">Color Space</text>
<text x="650.5" y="721.3" textLength="85.4" lengthAdjust="spacingAndGlyphs">Linear Rec.709</text>
<text x="559.6" y="748" textLength="31.7" lengthAdjust="spacingAndGlyphs">Alpha</text>
<text x="650.5" y="748.1" textLength="73.4" lengthAdjust="spacingAndGlyphs">Premultiplied</text>
<text x="559.9" y="771.05" textLength="37.1" lengthAdjust="spacingAndGlyphs">Vector</text>
<text x="851.1" y="303.5" textLength="43.9" lengthAdjust="spacingAndGlyphs">Multiply</text>
<text x="932.8" y="330.05" textLength="30.9" lengthAdjust="spacingAndGlyphs">Value</text>
<text x="843.2" y="359.2" textLength="43.9" lengthAdjust="spacingAndGlyphs">Multiply</text>
<text x="853.3" y="386" textLength="35.4" lengthAdjust="spacingAndGlyphs">Clamp</text>
<text x="836.7" y="409.15" textLength="31.1" lengthAdjust="spacingAndGlyphs">Value</text>
<text x="836.7" y="432.05" textLength="31.1" lengthAdjust="spacingAndGlyphs">Value</text>
<text x="857.1" y="564.5" textLength="43.9" lengthAdjust="spacingAndGlyphs">Multiply</text>
<text x="938.8" y="591.05" textLength="30.9" lengthAdjust="spacingAndGlyphs">Value</text>
<text x="849.2" y="620.2" textLength="43.9" lengthAdjust="spacingAndGlyphs">Multiply</text>
<text x="859.3" y="645.9" textLength="35.4" lengthAdjust="spacingAndGlyphs">Clamp</text>
<text x="842.7" y="670.15" textLength="31.1" lengthAdjust="spacingAndGlyphs">Value</text>
<text x="842.7" y="693.05" textLength="31.1" lengthAdjust="spacingAndGlyphs">Value</text>
<text x="1049.1" y="321.5" textLength="22.2" lengthAdjust="spacingAndGlyphs">Add</text>
<text x="1127.5" y="347.85" textLength="34.5" lengthAdjust="spacingAndGlyphs">Result</text>
<text x="1041.2" y="378.85" textLength="30.3" lengthAdjust="spacingAndGlyphs">Color</text>
<text x="1041.2" y="404.95" textLength="22.3" lengthAdjust="spacingAndGlyphs">Add</text>
<text x="1051.3" y="432.2" textLength="73.8" lengthAdjust="spacingAndGlyphs">Clamp Result</text>
<text x="1051.3" y="458" textLength="74.7" lengthAdjust="spacingAndGlyphs">Clamp Factor</text>
<text x="1034.7" y="504.65" textLength="8.35" lengthAdjust="spacingAndGlyphs">A</text>
<text x="1034.7" y="527.55" textLength="8.35" lengthAdjust="spacingAndGlyphs">B</text>
<text x="1239.7" y="195.5" textLength="65.5" lengthAdjust="spacingAndGlyphs">Add Shader</text>
<text x="1313.2" y="222.05" textLength="39.6" lengthAdjust="spacingAndGlyphs">Shader</text>
<text x="1225.1" y="248.9" textLength="39.7" lengthAdjust="spacingAndGlyphs">Shader</text>
<text x="1225.1" y="271.9" textLength="39.7" lengthAdjust="spacingAndGlyphs">Shader</text>
<text x="1414.1" y="195.5" textLength="76" lengthAdjust="spacingAndGlyphs">Group Output</text>
<text x="1399.7" y="222.05" textLength="66.9" lengthAdjust="spacingAndGlyphs">Background</text>
</g>
<g class="t" filter="url(#ts2)">
<text x="332.2" y="307" textLength="8.35" lengthAdjust="spacingAndGlyphs">X</text>
<text x="408.43" y="307" textLength="20.87" lengthAdjust="spacingAndGlyphs">0 m</text>
<text x="332.2" y="326.8" textLength="8.35" lengthAdjust="spacingAndGlyphs">Y</text>
<text x="408.43" y="326.8" textLength="20.87" lengthAdjust="spacingAndGlyphs">0 m</text>
<text x="332.2" y="347.6" textLength="7.65" lengthAdjust="spacingAndGlyphs">Z</text>
<text x="408.43" y="347.6" textLength="20.87" lengthAdjust="spacingAndGlyphs">0 m</text>
<text x="332.2" y="415.9" textLength="8.35" lengthAdjust="spacingAndGlyphs">X</text>
<text x="395.59" y="415.9" textLength="32.21" lengthAdjust="spacingAndGlyphs">1.000</text>
<text x="332.2" y="436.9" textLength="8.35" lengthAdjust="spacingAndGlyphs">Y</text>
<text x="395.59" y="436.9" textLength="32.21" lengthAdjust="spacingAndGlyphs">1.000</text>
<text x="332.2" y="457.9" textLength="7.65" lengthAdjust="spacingAndGlyphs">Z</text>
<text x="395.59" y="457.9" textLength="32.21" lengthAdjust="spacingAndGlyphs">1.000</text>
<text x="598.2" y="107.6" textLength="75.8" lengthAdjust="spacingAndGlyphs">starmap_20...</text>
<text x="694.42" y="107.6" textLength="7.16" lengthAdjust="spacingAndGlyphs">3</text>
<text x="598.2" y="360.5" textLength="81.5" lengthAdjust="spacingAndGlyphs">constellation...</text>
<text x="694.42" y="360.5" textLength="7.16" lengthAdjust="spacingAndGlyphs">3</text>
<text x="599.6" y="615.8" textLength="80" lengthAdjust="spacingAndGlyphs">hiptyc_2020...</text>
<text x="695.82" y="615.8" textLength="7.16" lengthAdjust="spacingAndGlyphs">3</text>
<text x="1049.4" y="481.8" textLength="35.9" lengthAdjust="spacingAndGlyphs">Factor</text>
<text x="1113.3" y="481.8" textLength="33.4" lengthAdjust="spacingAndGlyphs">0.100</text>
</g>
</svg>
</body></html>
